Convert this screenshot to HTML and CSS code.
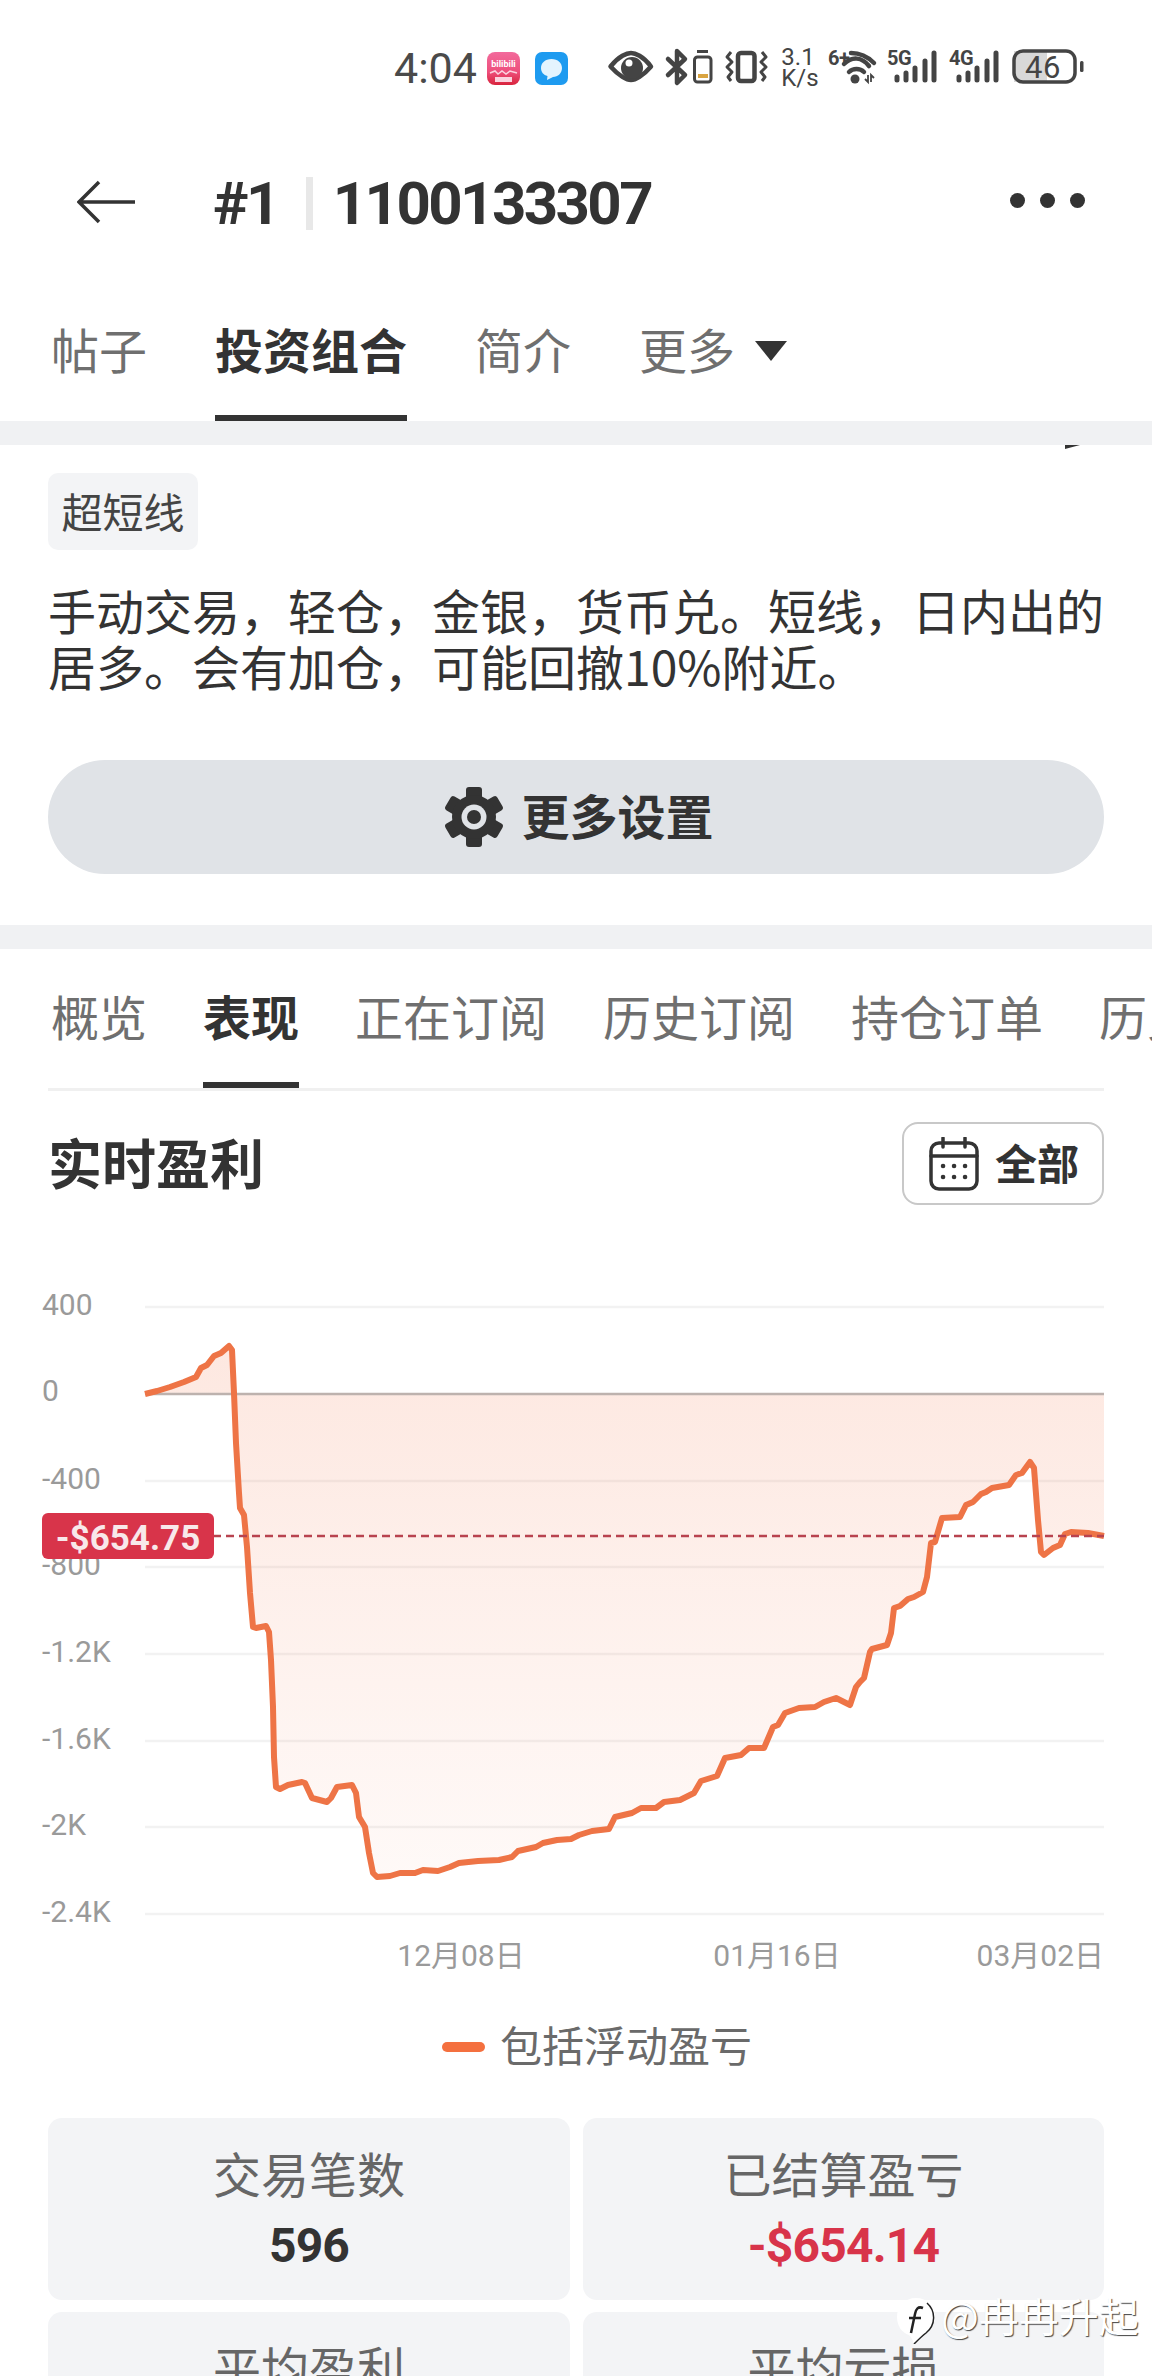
FILE: index.html
```html
<!DOCTYPE html>
<html lang="zh-CN">
<head>
    <meta charset="UTF-8">
    <meta name="viewport" content="width=device-width, initial-scale=1.0">
    <title>#1 1100133307</title>
    <link rel="stylesheet" href="styles.css">
</head>
<body>
    <!-- status bar -->
    <div class="statusbar">
        <span class="time">4:04</span>
        <svg class="app-icon app-first" viewBox="0 0 33 33">
            <defs>
                <linearGradient id="appPink" x1="0" y1="0" x2="0" y2="1">
                    <stop offset="0" stop-color="#f26a9c"/>
                    <stop offset="0.6" stop-color="#ee4f7c"/>
                    <stop offset="1" stop-color="#d8233c"/>
                </linearGradient>
            </defs>
            <rect width="33" height="33" rx="8" fill="url(#appPink)"/>
            <text class="app-text" x="16.5" y="15" text-anchor="middle">bilibili</text>
            <path d="M3 21 L8 19 L11 22 L15 19 L19 22 L23 19 L30 21" fill="none" stroke="#fbd3df" stroke-width="1.5"/>
            <rect x="8" y="25" width="17" height="5" fill="#fbd3df"/>
        </svg>
        <svg class="app-icon app-second" viewBox="0 0 33 33">
            <rect width="33" height="33" rx="7" fill="#1e9bf0"/>
            <path d="M16.5 7 C23 7 27 11 27 16 C27 21 23 25 18 25 L12 28 L12.5 24 C8.5 23 6 20 6 16 C6 11 10 7 16.5 7 Z" fill="#e4f4fe"/>
        </svg>
        <svg class="sys-icons" viewBox="600 44 490 50">
            <!-- eye -->
            <path class="ico-line" d="M610.5 67.5 C619 57 627 54 631 54 C635 54 643 57 651 67.5 C643 77 635 81 631 81 C627 81 619 77 610.5 67.5 Z"/>
            <circle class="ico-fill" cx="632" cy="69" r="11"/>
            <circle cx="629" cy="64" r="3.5" fill="#fff"/>
            <!-- bluetooth -->
            <path class="ico-line" d="M668 60 L685 76 L677 84 L677 52 L685 60 L668 76"/>
            <!-- small battery -->
            <rect class="ico-thin" x="694.5" y="58" width="16.500" height="25" rx="3"/>
            <rect class="ico-fill" x="697" y="51" width="11" height="3"/>
            <rect x="698" y="75" width="10" height="4" fill="#d9a441"/>
            <!-- vibrate -->
            <rect class="ico-line" x="738" y="54" width="16.500" height="28" rx="3"/>
            <path class="ico-zig" d="M731 53 L727 58 L732 63 L727 68 L732 73 L728 78 L731 82"/>
            <path class="ico-zig" d="M762 53 L766 58 L761 63 L766 68 L761 73 L765 78 L762 82"/>
            <!-- net speed -->
            <text class="sys-text" x="798" y="66" text-anchor="middle">3.1</text>
            <text class="sys-text" x="800" y="87" text-anchor="middle">K/s</text>
            <!-- wifi -->
            <text class="sys-small" x="828" y="66">6+</text>
            <path class="ico-line" d="M851 54 C860 54 868 58 874 64"/>
            <path class="ico-line" d="M844 65 C852 57 862 58 869 67"/>
            <path class="ico-line" d="M849 73 C853 69 860 69 864 73"/>
            <circle class="ico-fill" cx="855" cy="80" r="4.500"/>
            <path class="ico-arrows" d="M868 76 V83 L865 80 M871 83 V76 L874 79"/>
            <!-- 5G -->
            <text class="sys-small" x="887" y="66">5G</text>
            <path class="ico-bar" d="M897 78 V81 M906 74 V81 M915 69 V81 M925 62 V81 M934 54 V81"/>
            <!-- 4G -->
            <text class="sys-small" x="949" y="66">4G</text>
            <path class="ico-bar" d="M959 78 V81 M968 74 V81 M977 69 V81 M987 62 V81 M996 54 V81"/>
            <!-- battery -->
            <rect x="1014" y="52" width="33" height="31" fill="#d8d8d8"/>
            <rect class="ico-batt" x="1014" y="52" width="61" height="31" rx="9"/>
            <rect class="ico-fill" x="1080" y="62" width="3.500" height="11" rx="1.500"/>
            <text class="sys-batt" x="1043" y="79" text-anchor="middle">46</text>
        </svg>
    </div>

    <div class="header">
        <svg class="back-icon" viewBox="0 0 60 44">
            <path d="M58 22 H2 M22 2 L2 22 L22 42"/>
        </svg>
        <span class="header-title">#1</span>
        <span class="header-sep"></span>
        <span class="header-title">1100133307</span>
        <div class="more-dots"><i></i><i></i><i></i></div>
    </div>

    <div class="tabs tabs-main">
        <div class="tab">帖子</div>
        <div class="tab active">投资组合</div>
        <div class="tab">简介</div>
        <div class="tab">更多<span class="caret"></span></div>
    </div>

    <div class="band"></div>

    <div class="intro">
        <span class="clipped-mark"></span>
        <div class="chip">超短线</div>
        <p class="intro-text">手动交易，轻仓，金银，货币兑。短线，日内出的<br>居多。会有加仓，可能回撤10%附近。</p>
        <div class="settings-btn">
            <svg class="gear" viewBox="0 0 60 60">
                <g class="gear-teeth">
                    <rect x="22" y="0" width="16" height="16" rx="3"/>
                    <rect x="22" y="0" width="16" height="16" rx="3" transform="rotate(60 30 30)"/>
                    <rect x="22" y="0" width="16" height="16" rx="3" transform="rotate(120 30 30)"/>
                    <rect x="22" y="0" width="16" height="16" rx="3" transform="rotate(180 30 30)"/>
                    <rect x="22" y="0" width="16" height="16" rx="3" transform="rotate(240 30 30)"/>
                    <rect x="22" y="0" width="16" height="16" rx="3" transform="rotate(300 30 30)"/>
                    <circle cx="30" cy="30" r="22"/>
                </g>
                <circle class="gear-ring" cx="30" cy="30" r="12.5"/>
                <circle class="gear-dot" cx="30" cy="30" r="7"/>
            </svg>
            <span>更多设置</span>
        </div>
    </div>

    <div class="band"></div>

    <div class="tabs tabs-sub">
        <div class="tab">概览</div>
        <div class="tab active">表现</div>
        <div class="tab">正在订阅</div>
        <div class="tab">历史订阅</div>
        <div class="tab">持仓订单</div>
        <div class="tab">历史订单</div>
    </div>
    <div class="tabs-rule"></div>

    <div class="title-row">
        <h2>实时盈利</h2>
        <div class="range-btn">
            <svg class="calendar" viewBox="0 0 50 54">
                <rect x="2" y="6" width="46" height="46" rx="8"/>
                <path d="M2 19 H48 M14 1 V10 M36 1 V10"/>
                <path class="calendar-dots" d="M14 29 H14.1 M25 29 H25.1 M36 29 H36.1 M14 40 H14.1 M25 40 H25.1 M36 40 H36.1"/>
            </svg>
            <span>全部</span>
        </div>
    </div>

    <!-- chart, drawn in page coordinates -->
    <div class="chart">
        <svg class="chart-svg" viewBox="0 1280 1152 710">
            <defs>
                <linearGradient id="areaFill" gradientUnits="userSpaceOnUse" x1="0" y1="1346" x2="0" y2="1880">
                    <stop offset="0" stop-color="#f4764a" stop-opacity="0.17"/>
                    <stop offset="1" stop-color="#f4764a" stop-opacity="0.04"/>
                </linearGradient>
            </defs>
            <path class="grid-line" d="M145 1307 H1104 M145 1481 H1104 M145 1567 H1104 M145 1654 H1104 M145 1741 H1104 M145 1827 H1104 M145 1914 H1104"/>
            <path class="area" d="M145 1394 L157 1391 L170 1387 L184 1382 L196 1377 L201 1368 L207 1365 L214 1356 L221 1353 L229 1346 L232 1350 L234 1393 L236 1443 L239 1493 L240 1508 L244 1515 L247 1547 L250 1593 L253 1627 L256 1628 L266 1626 L269 1632 L271 1660 L273 1707 L274 1757 L276 1787 L280 1789 L288 1785 L302 1782 L305 1783 L312 1798 L327 1802 L331 1798 L337 1787 L352 1785 L356 1793 L359 1817 L362 1822 L365 1827 L369 1853 L373 1873 L377 1877 L390 1876 L400 1873 L415 1873 L423 1870 L438 1871 L450 1867 L459 1863 L478 1861 L499 1860 L512 1857 L518 1851 L536 1847 L543 1843 L557 1840 L571 1839 L579 1835 L592 1831 L609 1829 L615 1817 L632 1813 L641 1808 L656 1808 L664 1802 L680 1800 L694 1793 L701 1781 L717 1776 L725 1758 L741 1755 L749 1748 L764 1748 L773 1727 L778 1725 L785 1713 L799 1708 L815 1707 L824 1702 L836 1698 L850 1705 L856 1687 L860 1682 L864 1678 L870 1652 L872 1649 L887 1645 L891 1633 L894 1608 L900 1606 L908 1599 L914 1597 L923 1592 L927 1577 L931 1543 L935 1542 L942 1518 L960 1517 L966 1505 L973 1502 L981 1494 L986 1492 L992 1488 L1009 1485 L1016 1475 L1022 1473 L1030 1462 L1034 1468 L1038 1520 L1041 1552 L1044 1555 L1053 1548 L1060 1545 L1065 1534 L1071 1532 L1088 1533 L1104 1536 L1104 1394 Z"/>
            <path class="zero-line" d="M145 1394 H1104"/>
            <path class="curve" d="M145 1394 L157 1391 L170 1387 L184 1382 L196 1377 L201 1368 L207 1365 L214 1356 L221 1353 L229 1346 L232 1350 L234 1393 L236 1443 L239 1493 L240 1508 L244 1515 L247 1547 L250 1593 L253 1627 L256 1628 L266 1626 L269 1632 L271 1660 L273 1707 L274 1757 L276 1787 L280 1789 L288 1785 L302 1782 L305 1783 L312 1798 L327 1802 L331 1798 L337 1787 L352 1785 L356 1793 L359 1817 L362 1822 L365 1827 L369 1853 L373 1873 L377 1877 L390 1876 L400 1873 L415 1873 L423 1870 L438 1871 L450 1867 L459 1863 L478 1861 L499 1860 L512 1857 L518 1851 L536 1847 L543 1843 L557 1840 L571 1839 L579 1835 L592 1831 L609 1829 L615 1817 L632 1813 L641 1808 L656 1808 L664 1802 L680 1800 L694 1793 L701 1781 L717 1776 L725 1758 L741 1755 L749 1748 L764 1748 L773 1727 L778 1725 L785 1713 L799 1708 L815 1707 L824 1702 L836 1698 L850 1705 L856 1687 L860 1682 L864 1678 L870 1652 L872 1649 L887 1645 L891 1633 L894 1608 L900 1606 L908 1599 L914 1597 L923 1592 L927 1577 L931 1543 L935 1542 L942 1518 L960 1517 L966 1505 L973 1502 L981 1494 L986 1492 L992 1488 L1009 1485 L1016 1475 L1022 1473 L1030 1462 L1034 1468 L1038 1520 L1041 1552 L1044 1555 L1053 1548 L1060 1545 L1065 1534 L1071 1532 L1088 1533 L1104 1536"/>
            <path class="last-line" d="M213 1536 H1104"/>
            <text class="axis" x="42" y="1315">400</text>
            <text class="axis" x="42" y="1401">0</text>
            <text class="axis" x="42" y="1489">-400</text>
            <text class="axis" x="42" y="1575">-800</text>
            <text class="axis" x="42" y="1662">-1.2K</text>
            <text class="axis" x="42" y="1749">-1.6K</text>
            <text class="axis" x="42" y="1835">-2K</text>
            <text class="axis" x="42" y="1922">-2.4K</text>
            <text class="axis axis-date" x="461" y="1966" text-anchor="middle">12月08日</text>
            <text class="axis axis-date" x="777" y="1966" text-anchor="middle">01月16日</text>
            <text class="axis axis-date" x="1104" y="1966" text-anchor="end">03月02日</text>
        </svg>
        <div class="last-tag">-$654.75</div>
    </div>

    <div class="legend"><i></i><span>包括浮动盈亏</span></div>

    <div class="cards">
        <div class="card">
            <div class="card-label">交易笔数</div>
            <div class="card-value">596</div>
        </div>
        <div class="card">
            <div class="card-label">已结算盈亏</div>
            <div class="card-value red">-$654.14</div>
        </div>
        <div class="card">
            <div class="card-label">平均盈利</div>
        </div>
        <div class="card">
            <div class="card-label">平均亏损</div>
        </div>
    </div>

    <!-- watermark sits over the cards -->
    <div class="watermark">
        <svg class="wm-logo" viewBox="0 0 38 46">
            <path d="M19 0 C30 0 38 8 38 19 C38 28 31 35 26 37 C23 40 20 43 17 46 C16 43 15 40 12 37 C5 35 0 28 0 19 C0 8 8 0 19 0 Z" fill="#fff"/>
            <path d="M30 5 C39 13 39 27 29 35 C25 38 21 42 17 46" fill="none" stroke="#222" stroke-width="1.5"/>
            <path d="M26 10 C21 8 19 11 18 16 L14 35 M12 20 H24" fill="none" stroke="#222" stroke-width="2.5"/>
        </svg>
        <span>@冉冉升起</span>
    </div>
</body>
</html>
```

FILE: styles.css
```css
* {
    box-sizing: border-box;
}

html, body {
    margin: 0;
    padding: 0;
    height: 2376px;
    overflow: hidden;
    background: #fff;
}

body {
    position: relative;
    width: 1152px;
    font-family: "Noto Sans CJK SC", "Noto Sans", sans-serif;
    color: #333;
}

/* status bar */
.statusbar {
    display: flex;
    align-items: center;
    height: 136px;
    padding-left: 394px;
}

.time {
    font-family: Roboto, sans-serif;
    font-size: 43px;
    color: #4a4a4a;
    width: 93px;
}

.app-icon {
    width: 33px;
    height: 33px;
}

.app-second {
    margin-left: 15px;
}

.sys-icons {
    width: 490px;
    height: 50px;
    margin-left: 32px;
}

.app-text {
    font-family: Roboto, sans-serif;
    font-size: 9px;
    font-weight: 700;
    fill: #fff;
}

.ico-line {
    fill: none;
    stroke: #444;
    stroke-width: 4.5;
    stroke-linecap: round;
    stroke-linejoin: round;
}

.ico-thin {
    fill: none;
    stroke: #444;
    stroke-width: 3;
}

.ico-batt {
    fill: none;
    stroke: #444;
    stroke-width: 3.5;
}

.ico-zig {
    fill: none;
    stroke: #444;
    stroke-width: 3;
    stroke-linejoin: round;
}

.ico-arrows {
    fill: none;
    stroke: #444;
    stroke-width: 1.8;
}

.ico-fill {
    fill: #444;
}

.ico-bar {
    fill: none;
    stroke: #444;
    stroke-width: 5;
    stroke-linecap: round;
}

.sys-text {
    font-family: Roboto, sans-serif;
    font-size: 24px;
    fill: #444;
}

.sys-small {
    font-family: Roboto, sans-serif;
    font-size: 20px;
    font-weight: 700;
    letter-spacing: -0.5px;
    fill: #444;
}

.sys-batt {
    font-family: Roboto, sans-serif;
    font-size: 31px;
    letter-spacing: 0.5px;
    fill: #444;
}

/* header */
.header {
    display: flex;
    align-items: center;
    height: 134px;
    padding-left: 77px;
    position: relative;
}

.back-icon {
    width: 60px;
    height: 44px;
    margin: 0 76px 2px 0;
    fill: none;
    stroke: #333;
    stroke-width: 3.5;
}

.header-title {
    font-family: Roboto, sans-serif;
    font-size: 60px;
    font-weight: 700;
    letter-spacing: -2.6px;
    color: #333;
}

.header-sep {
    width: 7px;
    height: 53px;
    background: #e8e8e8;
    margin: 0 20px 0 28px;
}

.more-dots {
    display: flex;
    gap: 15px;
    margin: 0 67px 5px auto;
}

.more-dots i {
    width: 15px;
    height: 15px;
    border-radius: 50%;
    background: #333;
}

/* tabs */
.tabs {
    display: flex;
    white-space: nowrap;
    overflow: hidden;
    font-size: 48px;
    line-height: 56px;
    color: #6f6f6f;
}

.tab {
    flex: none;
    display: flex;
    align-items: flex-start;
    border-bottom: 6px solid transparent;
}

.tab.active {
    color: #333;
    font-weight: 700;
    border-bottom-color: #333;
}

.tabs-main {
    height: 151px;
    padding-left: 51px;
    gap: 68px;
}

.tabs-main .tab {
    padding-top: 50px;
}

.tabs-sub {
    height: 139px;
    padding-left: 51px;
    gap: 56px;
}

.tabs-sub .tab {
    padding-top: 38px;
}

.tabs-rule {
    height: 3px;
    margin: 0 48px;
    background: #f0f0f0;
}

.caret {
    width: 0;
    height: 0;
    margin: 21px 0 0 20px;
    border-left: 16px solid transparent;
    border-right: 16px solid transparent;
    border-top: 20px solid #333;
}

.band {
    height: 24px;
    background: #f0f1f3;
}

/* intro */
.intro {
    position: relative;
    padding: 28px 48px 51px;
}

.clipped-mark {
    position: absolute;
    top: 0;
    right: 72px;
    width: 15px;
    height: 4px;
    background: #333;
    clip-path: polygon(0 0, 100% 0, 0 100%);
}

.chip {
    width: 150px;
    height: 77px;
    line-height: 74px;
    text-align: center;
    font-size: 41px;
    color: #444;
    background: #f3f4f6;
    border-radius: 10px;
}

.intro-text {
    margin: 31px 0 0;
    font-size: 48px;
    line-height: 56px;
    white-space: nowrap;
    color: #333;
}

.settings-btn {
    display: flex;
    align-items: center;
    justify-content: center;
    gap: 17px;
    height: 114px;
    margin-top: 67px;
    padding-left: 6px;
    border-radius: 57px;
    background: #e0e3e7;
    font-size: 48px;
    font-weight: 700;
}

.settings-btn span {
    padding-bottom: 6px;
}

.gear {
    width: 60px;
    height: 60px;
}

.gear-teeth {
    fill: #333;
}

.gear-ring {
    fill: #e0e3e7;
}

.gear-dot {
    fill: #333;
}

/* chart title */
.title-row {
    display: flex;
    align-items: center;
    justify-content: space-between;
    margin: 31px 48px 0;
}

.title-row h2 {
    margin: 0;
    padding-bottom: 4px;
    font-size: 54px;
    line-height: 60px;
    font-weight: 700;
}

.range-btn {
    display: flex;
    align-items: center;
    gap: 16px;
    width: 202px;
    height: 83px;
    padding-left: 25px;
    border: 2px solid #c8c8c8;
    border-radius: 16px;
    font-size: 42px;
    font-weight: 700;
}

.range-btn span {
    padding-bottom: 5px;
}

.calendar {
    width: 50px;
    height: 54px;
    fill: none;
    stroke: #333;
    stroke-width: 3.5;
    stroke-linecap: round;
}

.calendar-dots {
    stroke-width: 4.5;
}

/* chart */
.chart {
    position: relative;
    margin-top: 75px;
    height: 710px;
}

.chart-svg {
    display: block;
    width: 1152px;
    height: 710px;
}

.grid-line {
    fill: none;
    stroke: #f2f2f2;
    stroke-width: 2.5;
}

.zero-line {
    fill: none;
    stroke: #bdb2ae;
    stroke-width: 2.5;
}

.area {
    fill: url(#areaFill);
}

.curve {
    fill: none;
    stroke: #ee7446;
    stroke-width: 6;
    stroke-linejoin: round;
}

.last-line {
    fill: none;
    stroke: #b8434f;
    stroke-width: 2.5;
    stroke-dasharray: 8 5;
}

.axis {
    font-family: Roboto, sans-serif;
    font-size: 30px;
    fill: #9a9a9a;
}

.axis-date {
    font-family: Roboto, "Noto Sans CJK SC", sans-serif;
    font-size: 30px;
}

.last-tag {
    position: absolute;
    left: 42px;
    top: 233px;
    width: 172px;
    height: 46px;
    padding-top: 3px;
    line-height: 46px;
    text-align: center;
    border-radius: 6px;
    background: #d8344a;
    color: #f8e8ea;
    font-family: Roboto, sans-serif;
    font-size: 35px;
    font-weight: 700;
}

/* legend */
.legend {
    display: flex;
    align-items: center;
    justify-content: center;
    gap: 15px;
    height: 56px;
    margin-top: 29px;
    padding-left: 42px;
    font-size: 42px;
    color: #6a6a6a;
}

.legend span {
    line-height: 50px;
    margin-bottom: 6px;
}

.legend i {
    width: 43px;
    height: 10px;
    border-radius: 5px;
    background: #f4703f;
}

/* stat cards */
.cards {
    display: grid;
    grid-template-columns: 522px 521px;
    gap: 12px 13px;
    margin: 43px 48px 0;
}

.card {
    height: 182px;
    padding-top: 26px;
    border-radius: 14px;
    background: #f3f4f6;
    text-align: center;
}

.card-label {
    font-size: 48px;
    line-height: 56px;
    color: #666;
}

.card-value {
    margin-top: 18px;
    font-family: Roboto, sans-serif;
    font-size: 48px;
    line-height: 56px;
    font-weight: 700;
    letter-spacing: -0.8px;
    color: #333;
}

.card-value.red {
    color: #d8344a;
}

/* watermark */
.watermark {
    position: absolute;
    left: 897px;
    top: 2292px;
    display: flex;
    align-items: center;
    gap: 6px;
    color: #fff;
    font-size: 40px;
    line-height: 46px;
    white-space: nowrap;
    text-shadow: 1px 1px 1px #444;
}

.watermark span {
    margin-bottom: 12px;
}

.wm-logo {
    width: 38px;
    height: 46px;
}
```
